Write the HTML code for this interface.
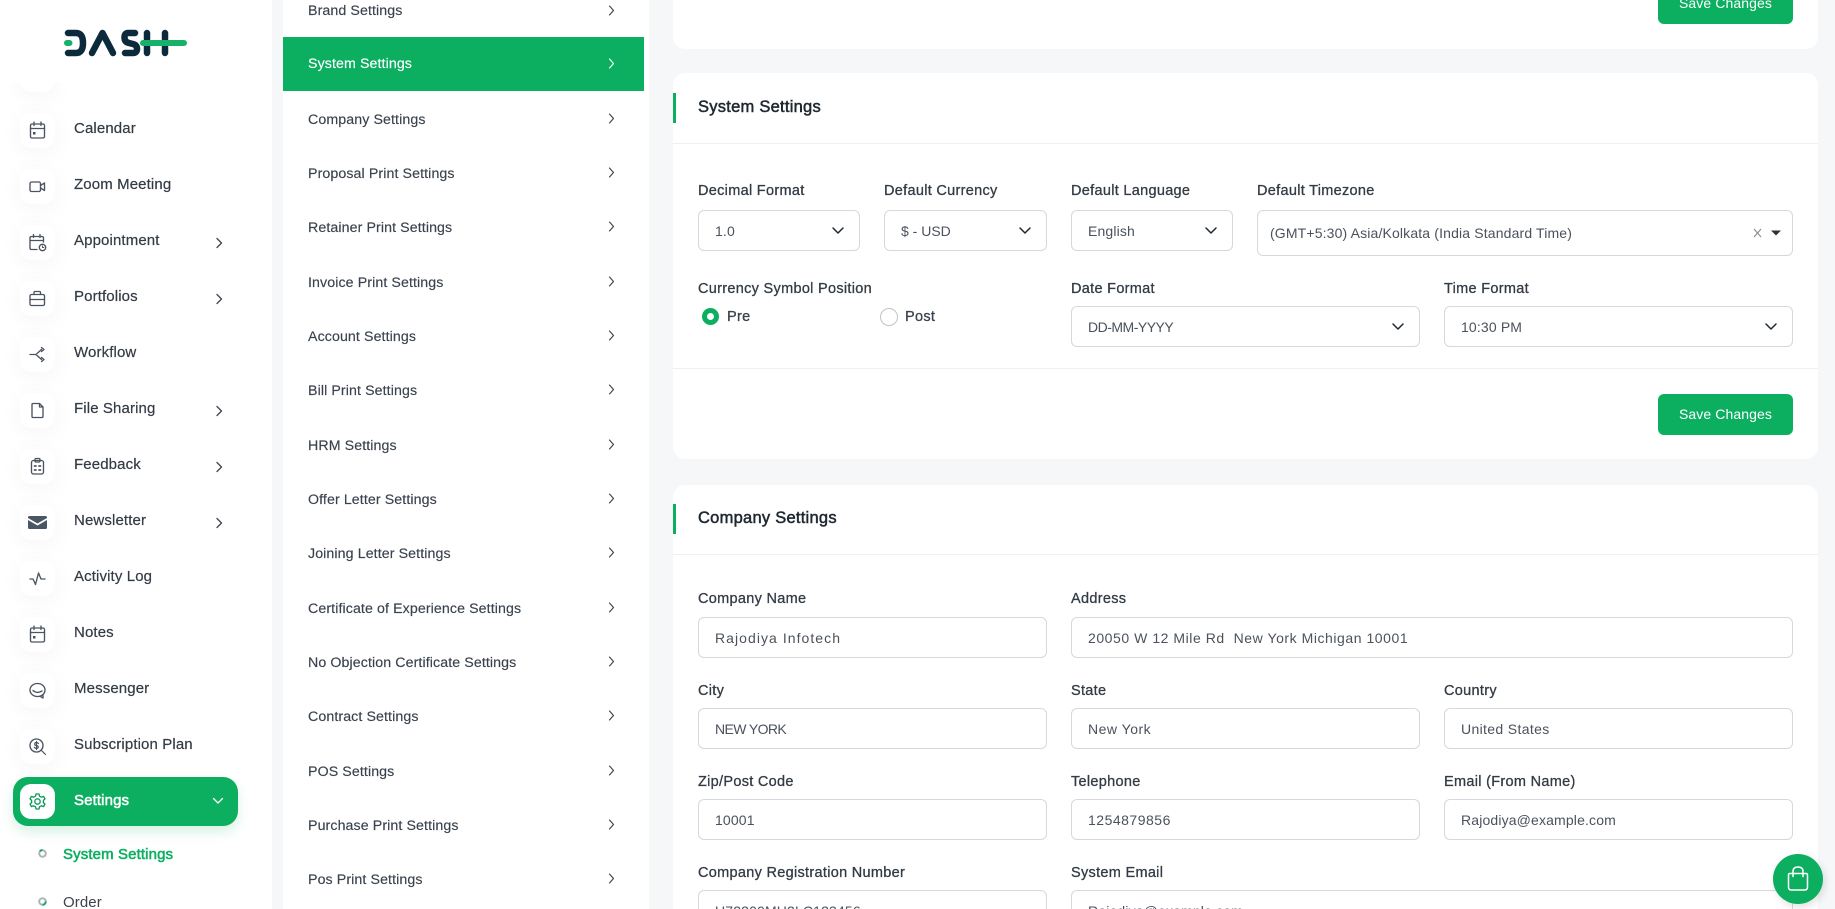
<!DOCTYPE html>
<html lang="en"><head><meta charset="utf-8"><title>System Settings</title>
<style>
*{box-sizing:border-box}
html,body{margin:0;padding:0;width:1835px;height:909px;overflow:hidden;background:#f6f7f9;font-family:"Liberation Sans",Arial,sans-serif;color:#333b45}
#r{position:relative;width:1835px;height:909px;overflow:hidden}
.a{position:absolute}
.t{position:absolute;height:20px;line-height:20px;white-space:nowrap;font-size:15px}
.side{left:0;top:0;width:272px;height:909px;background:#fff}
.clip{left:0;top:83px;width:272px;height:826px;overflow:hidden}
.tile{position:absolute;left:20px;width:35px;height:35px;background:#fff;border-radius:11px;box-shadow:0 4px 24px rgba(0,0,0,.045)}
.tile svg{position:absolute;left:7px;top:7px;width:21px;height:21px;fill:none;stroke:#4a5460;stroke-width:1.35;stroke-linecap:round;stroke-linejoin:round}
.nv{left:74px;font-size:15px;letter-spacing:.12px;color:#333b45;-webkit-text-stroke:.2px #333b45;margin-top:1px}
.ch{position:absolute;width:8px;height:12px;fill:none;stroke:#3b444f;stroke-width:1.3;stroke-linecap:round;stroke-linejoin:round}
.panel{left:283px;top:0;width:366px;height:909px;background:#fff}
.mi{left:308px;font-size:14.2px;letter-spacing:.1px;color:#39424e;-webkit-text-stroke:.15px #39424e;margin-top:1px}
.card{position:absolute;left:673px;width:1145px;background:#fff;border-radius:12px}
.ln{position:absolute;left:673px;width:1145px;height:1px;background:#eef0f2}
.acc{position:absolute;left:673px;width:3px;height:30px;background:#0caf60}
.h{left:698px;font-size:16.5px;font-weight:400;letter-spacing:.25px;color:#1e2630;-webkit-text-stroke:.5px #1e2630}
.l{font-size:14.5px;letter-spacing:.3px;color:#333b45;-webkit-text-stroke:.3px #333b45;margin-top:1px}
.f{position:absolute;border:1px solid #d6d8db;border-radius:6px;background:#fff;height:41px}
.v{font-size:14px;letter-spacing:.15px;color:#4a525c}
.dn{position:absolute;width:14px;height:9px;fill:none;stroke:#1f2833;stroke-width:1.5;stroke-linecap:round;stroke-linejoin:round}
.btn{position:absolute;left:1658px;width:135px;height:41px;background:#0caf60;border-radius:6px;color:#fff;font-size:14px;line-height:41px;text-align:center;letter-spacing:.1px}
</style></head><body><div id="r">

<div class="a side"></div>
<svg class="a" style="left:0;top:0" width="200" height="70" viewBox="0 0 200 70" fill="none" stroke-linecap="round">
<g stroke="#0b2b3d" stroke-width="6.500">
<path d="M68 33H76Q83 33 83 43Q83 53 76 53H68"/>
<path d="M92 53L102.500 33L113 53" stroke-linejoin="round"/>
<path d="M135 33H128Q124.500 33 124.500 37.500Q124.500 42 129 43L133 44Q137 45 137 49Q137 53 133 53H125"/>
<path d="M147 33V39M147 47V53M165 33V39M165 47V53"/>
</g>
<g stroke="#17b169" stroke-width="6"><path d="M67 43H69.500M143 43H184"/></g>
</svg>

<div class="a clip">
<div class="tile" style="top:-26px"></div>
<div style="position:absolute;left:0;top:-83px;width:272px;height:909px">
<div class="tile" style="top:113px"><svg viewBox="0 0 21 21"><rect x="3.500" y="4" width="14" height="14" rx="1.500"/><path d="M3.500 8.500H17.500M7 2V5.500M14 2V5.500"/><rect x="6" y="12" width="2.500" height="2.500" fill="#454f5b" stroke="none"/></svg></div>
<div class="tile" style="top:169px"><svg viewBox="0 0 21 21"><rect x="3" y="6" width="10.500" height="9.500" rx="1.500"/><path d="M13.500 9.500L17.500 7V14.500L13.500 12"/></svg></div>
<div class="tile" style="top:225px"><svg viewBox="0 0 21 21"><path d="M10 17.500H4.500Q3 17.500 3 16V6Q3 4.500 4.500 4.500H15Q16.500 4.500 16.500 6V10M3 8.500H16.500M6.500 2.500V5.500M13 2.500V5.500"/><circle cx="15.500" cy="15.500" r="3.200"/><path d="M15.500 14V15.500H16.800" stroke-width="1"/></svg></div>
<div class="tile" style="top:281px"><svg viewBox="0 0 21 21"><rect x="3" y="6.500" width="14.500" height="11" rx="1.500"/><path d="M7 6.500V4.500Q7 3.500 8 3.500H12.500Q13.500 3.500 13.500 4.500V6.500M3 11.500H17.500"/></svg></div>
<div class="tile" style="top:337px"><svg viewBox="0 0 21 21"><path d="M3 10.500H9M9 10.500L14.500 5.500M9 10.500L14.500 15.500M14.500 3.500L17 5.500L14.500 7.500M14.500 13.500L17 15.500L14.500 17.500"/></svg></div>
<div class="tile" style="top:393px"><svg viewBox="0 0 21 21"><path d="M12.500 3.500H6Q5 3.500 5 4.500V16.500Q5 17.500 6 17.500H15Q16 17.500 16 16.500V7L12.500 3.500V7H16"/></svg></div>
<div class="tile" style="top:449px"><svg viewBox="0 0 21 21"><rect x="4.500" y="4.500" width="12" height="13.500" rx="2"/><rect x="8" y="2.500" width="5" height="3.500" rx="1"/><path d="M7.500 10H9M12 10H13.500M7.500 14H9M12 14H13.500" stroke-width="1.700"/></svg></div>
<div class="tile" style="top:505px"><svg viewBox="0 0 21 21"><path d="M1 5.500Q1 4 2.500 4H18.500Q20 4 20 5.500V6L10.500 11.500L1 6Z" fill="#4a5663" stroke="none"/><path d="M1 8L10.500 13.500L20 8V15.500Q20 17 18.500 17H2.500Q1 17 1 15.500Z" fill="#4a5663" stroke="none"/></svg></div>
<div class="tile" style="top:561px"><svg viewBox="0 0 21 21"><path d="M3 11H6L8.500 16.500L11.500 5L14 11H18"/></svg></div>
<div class="tile" style="top:617px"><svg viewBox="0 0 21 21"><rect x="3.500" y="4" width="14" height="14" rx="1.500"/><path d="M3.500 8.500H17.500M7 2V5.500M14 2V5.500"/><rect x="6" y="12" width="2.500" height="2.500" fill="#454f5b" stroke="none"/></svg></div>
<div class="tile" style="top:673px"><svg viewBox="0 0 21 21"><ellipse cx="10.500" cy="10" rx="7.500" ry="6.500"/><path d="M6 10.500Q10 14 15 11M13 16.200L16 18V14.500"/></svg></div>
<div class="tile" style="top:729px"><svg viewBox="0 0 21 21"><circle cx="9.500" cy="9.500" r="6.500"/><path d="M14.500 14.500L18.500 18.500M11.500 7.500Q10.500 6.500 9.300 6.500Q7.500 6.700 7.700 8.200Q8 9.500 9.500 9.500Q11.300 9.800 11.300 11Q11 12.500 9.300 12.400Q8 12.300 7.300 11.300M9.500 5.500V13.500" stroke-width="1.200"/></svg></div>

<div class="a" style="left:13px;top:777px;width:225px;height:49px;background:#0caf60;border-radius:15px;box-shadow:0 6px 12px rgba(12,175,96,.16)"></div>
<div class="tile" style="top:784px;box-shadow:none"><svg viewBox="0 0 21 21" style="stroke:#0a9c57"><circle cx="10.500" cy="10.500" r="2.700"/><path d="M9 3H12L12.500 5.200L14.500 6.200L16.600 5.400L18 7.900L16.400 9.400V11.600L18 13.100L16.600 15.600L14.500 14.800L12.500 15.800L12 18H9L8.500 15.800L6.500 14.800L4.400 15.600L3 13.100L4.600 11.600V9.400L3 7.900L4.400 5.400L6.500 6.200L8.500 5.200Z"/></svg></div>

<span class="t nv" style="top:118px">Calendar</span>
<span class="t nv" style="top:174px">Zoom Meeting</span>
<span class="t nv" style="top:230px">Appointment</span>
<span class="t nv" style="top:286px">Portfolios</span>
<span class="t nv" style="top:342px">Workflow</span>
<span class="t nv" style="top:398px">File Sharing</span>
<span class="t nv" style="top:454px">Feedback</span>
<span class="t nv" style="top:510px">Newsletter</span>
<span class="t nv" style="top:566px">Activity Log</span>
<span class="t nv" style="top:622px">Notes</span>
<span class="t nv" style="top:678px">Messenger</span>
<span class="t nv" style="top:734px">Subscription Plan</span>
<span class="t nv" style="top:790px;color:#fff;-webkit-text-stroke:.5px #fff">Settings</span>
<span class="t" style="left:63px;top:845px;font-size:15px;color:#0caf60;-webkit-text-stroke:.55px #0caf60;letter-spacing:.12px">System Settings</span>
<span class="t" style="left:63px;top:893px;font-size:15px;color:#3b444f;letter-spacing:.1px">Order</span>

<svg class="ch" style="left:215px;top:237px" viewBox="0 0 8 12"><path d="M2 1.500L6.500 6L2 10.500"/></svg>
<svg class="ch" style="left:215px;top:293px" viewBox="0 0 8 12"><path d="M2 1.500L6.500 6L2 10.500"/></svg>
<svg class="ch" style="left:215px;top:405px" viewBox="0 0 8 12"><path d="M2 1.500L6.500 6L2 10.500"/></svg>
<svg class="ch" style="left:215px;top:461px" viewBox="0 0 8 12"><path d="M2 1.500L6.500 6L2 10.500"/></svg>
<svg class="ch" style="left:215px;top:517px" viewBox="0 0 8 12"><path d="M2 1.500L6.500 6L2 10.500"/></svg>
<svg class="a" style="left:212px;top:797px" width="12" height="8" viewBox="0 0 12 8" fill="none" stroke="#fff" stroke-width="1.300" stroke-linecap="round" stroke-linejoin="round"><path d="M1.500 1.500L6 6L10.500 1.500"/></svg>

<svg class="a" style="left:36px;top:847px" width="13" height="13" viewBox="0 0 13 13" fill="none" stroke-width="2"><circle cx="6.500" cy="6.500" r="3.300" stroke="#aeb4b8"/><path d="M3.800 4.200A3.300 3.300 0 0 1 6.500 3.200" stroke="#0caf60"/></svg>
<svg class="a" style="left:36px;top:895px" width="13" height="13" viewBox="0 0 13 13" fill="none" stroke-width="2"><circle cx="6.500" cy="6.500" r="3.300" stroke="#aeb4b8"/><path d="M9.800 6.500A3.300 3.300 0 0 1 6.500 9.800" stroke="#0caf60"/></svg>
</div></div>

<div class="a panel"></div>
<div class="a" style="left:283px;top:37px;width:361px;height:54px;background:#0caf60"></div>
<span class="t mi" style="top:0">Brand Settings</span>
<span class="t mi" style="top:53px;color:#fff;-webkit-text-stroke:.15px #fff">System Settings</span>
<span class="t mi" style="top:109px">Company Settings</span>
<span class="t mi" style="top:163px">Proposal Print Settings</span>
<span class="t mi" style="top:217px">Retainer Print Settings</span>
<span class="t mi" style="top:272px">Invoice Print Settings</span>
<span class="t mi" style="top:326px">Account Settings</span>
<span class="t mi" style="top:380px">Bill Print Settings</span>
<span class="t mi" style="top:435px">HRM Settings</span>
<span class="t mi" style="top:489px">Offer Letter Settings</span>
<span class="t mi" style="top:543px">Joining Letter Settings</span>
<span class="t mi" style="top:598px">Certificate of Experience Settings</span>
<span class="t mi" style="top:652px">No Objection Certificate Settings</span>
<span class="t mi" style="top:706px">Contract Settings</span>
<span class="t mi" style="top:761px">POS Settings</span>
<span class="t mi" style="top:815px">Purchase Print Settings</span>
<span class="t mi" style="top:869px">Pos Print Settings</span>

<svg class="a" style="left:607px;top:0" width="9" height="909" viewBox="0 0 9 909" fill="none" stroke="#3b444f" stroke-width="1.150" stroke-linecap="round" stroke-linejoin="round">
<path d="M2.500 6L6.500 10.500L2.500 15"/>
<path d="M2.500 59L6.500 63.500L2.500 68" stroke="#fff"/>
<path d="M2.500 114L6.500 118.500L2.500 123"/>
<path d="M2.500 168L6.500 172.500L2.500 177"/>
<path d="M2.500 222L6.500 226.500L2.500 231"/>
<path d="M2.500 277L6.500 281.500L2.500 286"/>
<path d="M2.500 331L6.500 335.500L2.500 340"/>
<path d="M2.500 385L6.500 389.500L2.500 394"/>
<path d="M2.500 440L6.500 444.500L2.500 449"/>
<path d="M2.500 494L6.500 498.500L2.500 503"/>
<path d="M2.500 548L6.500 552.500L2.500 557"/>
<path d="M2.500 603L6.500 607.500L2.500 612"/>
<path d="M2.500 657L6.500 661.500L2.500 666"/>
<path d="M2.500 711L6.500 715.500L2.500 720"/>
<path d="M2.500 766L6.500 770.500L2.500 775"/>
<path d="M2.500 820L6.500 824.500L2.500 829"/>
<path d="M2.500 874L6.500 878.500L2.500 883"/>
</svg>

<!-- Cards -->
<div class="card" style="top:-20px;height:69px"></div>
<div class="btn" style="top:-17px">Save Changes</div>

<div class="card" style="top:73px;height:386px"></div>
<div class="acc" style="top:93px"></div>
<span class="t h" style="top:97px">System Settings</span>
<div class="ln" style="top:143px"></div>

<span class="t l" style="left:698px;top:180px">Decimal Format</span>
<span class="t l" style="left:884px;top:180px">Default Currency</span>
<span class="t l" style="left:1071px;top:180px">Default Language</span>
<span class="t l" style="left:1257px;top:180px">Default Timezone</span>

<div class="f" style="left:698px;top:210px;width:162px"></div>
<div class="f" style="left:884px;top:210px;width:163px"></div>
<div class="f" style="left:1071px;top:210px;width:162px"></div>
<div class="f" style="left:1257px;top:210px;width:536px;height:46px"></div>
<span class="t v" style="left:715px;top:221px">1.0</span>
<span class="t v" style="left:901px;top:221px;letter-spacing:0">$ - USD</span>
<span class="t v" style="left:1088px;top:221px">English</span>
<span class="t v" style="left:1270px;top:223px">(GMT+5:30) Asia/Kolkata (India Standard Time)</span>
<svg class="dn" style="left:831px;top:226px" viewBox="0 0 14 9"><path d="M2 2L7 7L12 2"/></svg>
<svg class="dn" style="left:1018px;top:226px" viewBox="0 0 14 9"><path d="M2 2L7 7L12 2"/></svg>
<svg class="dn" style="left:1204px;top:226px" viewBox="0 0 14 9"><path d="M2 2L7 7L12 2"/></svg>
<svg class="a" style="left:1752px;top:227px" width="36" height="12" viewBox="0 0 36 12" fill="none"><path d="M2 2L9 10M9 2L2 10" stroke="#888e94" stroke-width="1.200"/><path d="M19 3.500H29L24 8.500Z" fill="#2a323c"/></svg>

<span class="t l" style="left:698px;top:278px">Currency Symbol Position</span>
<span class="t l" style="left:1071px;top:278px">Date Format</span>
<span class="t l" style="left:1444px;top:278px">Time Format</span>

<div class="a" style="left:702px;top:308px;width:17px;height:17px;border-radius:50%;border:5px solid #0caf60;background:#fff"></div>
<span class="t l" style="left:727px;top:306px;color:#3b444f">Pre</span>
<div class="a" style="left:880px;top:308px;width:18px;height:18px;border-radius:50%;border:1px solid #bfc3c7;background:#fff"></div>
<span class="t l" style="left:905px;top:306px;color:#3b444f">Post</span>

<div class="f" style="left:1071px;top:306px;width:349px"></div>
<div class="f" style="left:1444px;top:306px;width:349px"></div>
<span class="t v" style="left:1088px;top:317px;letter-spacing:-.5px">DD-MM-YYYY</span>
<span class="t v" style="left:1461px;top:317px">10:30 PM</span>
<svg class="dn" style="left:1391px;top:322px" viewBox="0 0 14 9"><path d="M2 2L7 7L12 2"/></svg>
<svg class="dn" style="left:1764px;top:322px" viewBox="0 0 14 9"><path d="M2 2L7 7L12 2"/></svg>

<div class="ln" style="top:368px"></div>
<div class="btn" style="top:394px">Save Changes</div>

<div class="card" style="top:485px;height:440px"></div>
<div class="acc" style="top:504px"></div>
<span class="t h" style="top:508px">Company Settings</span>
<div class="ln" style="top:554px"></div>

<span class="t l" style="left:698px;top:588px">Company Name</span>
<span class="t l" style="left:1071px;top:588px">Address</span>
<div class="f" style="left:698px;top:617px;width:349px"></div>
<div class="f" style="left:1071px;top:617px;width:722px"></div>
<span class="t v" style="left:715px;top:628px;letter-spacing:1.05px">Rajodiya Infotech</span>
<span class="t v" style="left:1088px;top:628px;white-space:pre;letter-spacing:.55px">20050 W 12 Mile Rd  New York Michigan 10001</span>

<span class="t l" style="left:698px;top:680px">City</span>
<span class="t l" style="left:1071px;top:680px">State</span>
<span class="t l" style="left:1444px;top:680px">Country</span>
<div class="f" style="left:698px;top:708px;width:349px"></div>
<div class="f" style="left:1071px;top:708px;width:349px"></div>
<div class="f" style="left:1444px;top:708px;width:349px"></div>
<span class="t v" style="left:715px;top:719px;letter-spacing:-.6px">NEW YORK</span>
<span class="t v" style="left:1088px;top:719px;letter-spacing:.5px">New York</span>
<span class="t v" style="left:1461px;top:719px;letter-spacing:.35px">United States</span>

<span class="t l" style="left:698px;top:771px">Zip/Post Code</span>
<span class="t l" style="left:1071px;top:771px">Telephone</span>
<span class="t l" style="left:1444px;top:771px">Email (From Name)</span>
<div class="f" style="left:698px;top:799px;width:349px"></div>
<div class="f" style="left:1071px;top:799px;width:349px"></div>
<div class="f" style="left:1444px;top:799px;width:349px"></div>
<span class="t v" style="left:715px;top:810px">10001</span>
<span class="t v" style="left:1088px;top:810px;letter-spacing:.5px">1254879856</span>
<span class="t v" style="left:1461px;top:810px">Rajodiya@example.com</span>

<span class="t l" style="left:698px;top:862px">Company Registration Number</span>
<span class="t l" style="left:1071px;top:862px">System Email</span>
<div class="f" style="left:698px;top:890px;width:349px"></div>
<div class="f" style="left:1071px;top:890px;width:722px"></div>
<span class="t v" style="left:715px;top:901px">U72200MH2LC123456</span>
<span class="t v" style="left:1088px;top:901px">Rajodiya@example.com</span>

<div class="a" style="left:1773px;top:854px;width:50px;height:50px;border-radius:50%;background:#0caf60;box-shadow:2px 3px 8px rgba(0,0,0,.12)"></div>
<svg class="a" style="left:1785px;top:865px" width="26" height="27" viewBox="0 0 26 27" fill="none" stroke="#fff" stroke-width="1.500" stroke-linecap="round" stroke-linejoin="round"><path d="M4.500 8.500H21Q22.500 8.500 22.500 10V22Q22.500 25 19.500 25H6.500Q3.500 25 3.500 22V10Q3.500 8.500 4.500 8.500Z"/><path d="M8 11.500V6.500Q8 2 13 2Q18 2 18 6.500V11.500"/></svg>
</div></body></html>
